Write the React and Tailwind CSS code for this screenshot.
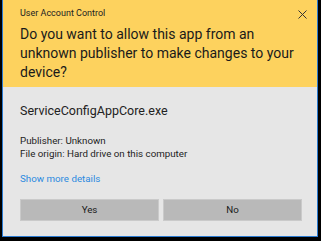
export default function App() {
  return (
    <div className="w-[321px] h-[241px] bg-black overflow-hidden font-['Roboto',sans-serif]">
      <div className="ml-[2px] w-[316px] h-[237px] border border-t-0 border-[#2a7ad1] bg-[#e6e6e6] flex flex-col">
        {/* header */}
        <div className="bg-[#fdd25e] h-[87px] pl-[17px] pr-[10px] pt-[7px]">
          <div className="flex items-center justify-between h-[14px]">
            <span className="text-[9px] text-[#222]">User Account Control</span>
            <svg width="9" height="9" viewBox="0 0 9 9">
              <path d="M0.5 0.5 L8.5 8.5 M8.5 0.5 L0.5 8.5" stroke="#333" strokeWidth="1" fill="none" />
            </svg>
          </div>
          <p className="mt-[4px] text-[14px] leading-[19px] text-[#1a1a1a]">
            Do you want to allow this app from an unknown publisher to make changes to your device?
          </p>
        </div>
        {/* body */}
        <div className="pl-[17px] pr-[15px] pt-[15px] flex flex-col">
          <span className="text-[12.5px] text-[#222] leading-[18px]">ServiceConfigAppCore.exe</span>
          <div className="mt-[14px] text-[9.75px] leading-[13px] text-[#222]">
            <div>Publisher: Unknown</div>
            <div>File origin: Hard drive on this computer</div>
          </div>
          <a href="#" className="mt-[12px] text-[9.75px] leading-[13px] text-[#2b8ae0]">Show more details</a>
          <div className="mt-[14px] flex gap-[4px]">
            <button className="flex-1 h-[22px] bg-[#b9b9b9] border border-[#cacaca] text-[9.75px] text-[#1a1a1a]">Yes</button>
            <button className="flex-1 h-[22px] bg-[#b9b9b9] border border-[#cacaca] text-[9.75px] text-[#1a1a1a]">No</button>
          </div>
        </div>
      </div>
    </div>
  );
}
